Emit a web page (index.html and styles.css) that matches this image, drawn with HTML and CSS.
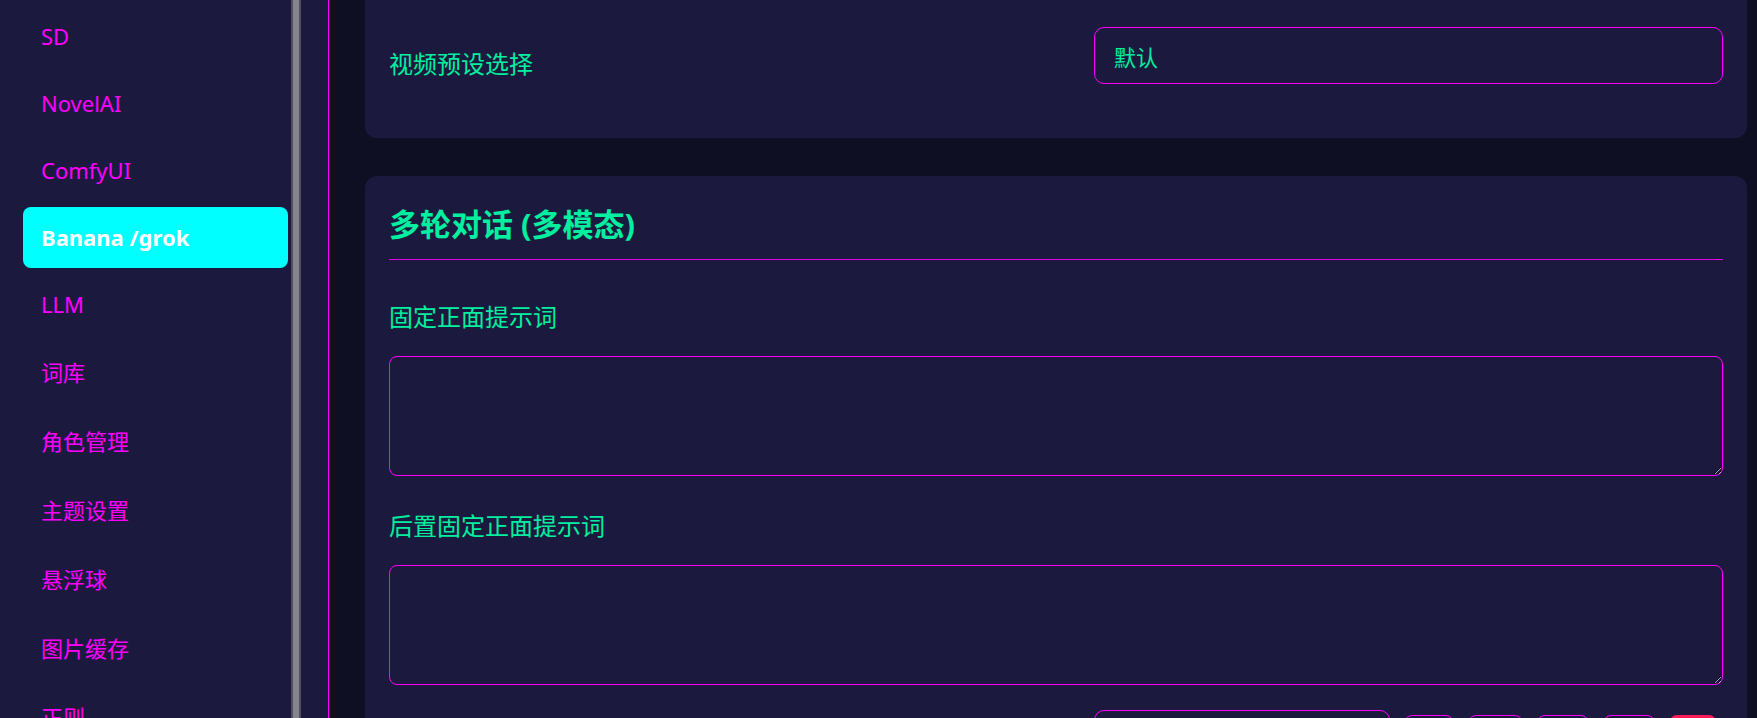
FILE: index.html
```html
<!DOCTYPE html>
<html lang="zh-CN">
<head>
<meta charset="utf-8">
<title>设置</title>
<link rel="stylesheet" href="styles.css">
</head>
<body>
<div class="app">
  <aside class="sidebar">
    <nav class="nav">
      <div class="nav-item">SD</div>
      <div class="nav-item">NovelAI</div>
      <div class="nav-item">ComfyUI</div>
      <div class="nav-item active">Banana /grok</div>
      <div class="nav-item">LLM</div>
      <div class="nav-item tall">词库</div>
      <div class="nav-item tall">角色管理</div>
      <div class="nav-item tall">主题设置</div>
      <div class="nav-item tall">悬浮球</div>
      <div class="nav-item tall">图片缓存</div>
      <div class="nav-item tall">正则</div>
    </nav>
    <div class="scrollbar"></div>
  </aside>
  <main class="main">
    <section class="card card-scrolled">
      <div class="row">
        <label class="row-label">视频预设选择</label>
        <div class="select">默认</div>
      </div>
    </section>
    <section class="card">
      <h2 class="card-title">多轮对话 (多模态)</h2>
      <div class="field">
        <label class="field-label">固定正面提示词</label>
        <textarea class="textarea"></textarea>
      </div>
      <div class="field last">
        <label class="field-label">后置固定正面提示词</label>
        <textarea class="textarea"></textarea>
      </div>
      <div class="row row-center">
        <div class="row-spacer"></div>
        <div class="controls">
          <input class="input" type="text">
          <button class="btn w1"></button>
          <button class="btn w2"></button>
          <button class="btn w3"></button>
          <button class="btn w4"></button>
          <button class="btn danger w5"></button>
        </div>
      </div>
    </section>
  </main>
</div>
</body>
</html>
```

FILE: styles.css
```css
* { box-sizing: border-box; }
html, body {
  margin: 0;
  height: 100%;
  overflow: hidden;
  background: #0f0f23;
  font-family: "Noto Sans", "Noto Sans CJK SC", sans-serif;
}
.app {
  display: flex;
  height: 718px;
}
.sidebar {
  width: 329px;
  flex: none;
  display: flex;
  background: #1b1a3e;
  border-right: 1px solid #ff00ff;
}
.nav {
  width: 291px;
  padding: 6px 3px 0 23px;
  display: flex;
  flex-direction: column;
  gap: 6px;
}
.nav-item {
  padding: 16px 18px;
  line-height: 29px;
  font-size: 22px;
  color: #ff00ff;
  border-radius: 8px;
  white-space: nowrap;
}
.nav-item.tall { line-height: 31px; }
.nav-item.active {
  background: #00ffff;
  color: #ffffff;
  font-weight: 700;
}
.scrollbar {
  width: 10px;
  flex: none;
  background: #85858f;
  border-left: 2px solid #50505e;
  border-right: 2px solid #50505e;
}
.main {
  flex: 1;
  padding: 0 10px 0 36px;
  overflow: hidden;
}
.card {
  background: #1b1a3e;
  border-radius: 12px;
  padding: 24px;
  margin-bottom: 38px;
}
.card-scrolled {
  margin-top: -40px;
  padding-top: 67px;
}
.row {
  display: flex;
  align-items: flex-start;
  margin-bottom: 30px;
}
.row-label {
  flex: 1;
  font-size: 24px;
  line-height: 36px;
  margin-top: 19px;
  color: #00f0a0;
}
.row-spacer { flex: 1; }
.select {
  width: 629px;
  height: 57px;
  border: 1px solid #ff00ff;
  border-radius: 10px;
  padding-left: 19px;
  display: flex;
  align-items: center;
  font-size: 22px;
  color: #00f0a0;
}
.card-title {
  margin: 0 0 39px;
  padding: 4px 0 15px;
  font-size: 31px;
  line-height: 40px;
  font-weight: 700;
  color: #00f0a0;
  border-bottom: 1px solid #e000e0;
}
.field { margin-bottom: 32px; }
.field.last { margin-bottom: 25px; }
.field-label {
  display: block;
  font-size: 24px;
  line-height: 36px;
  margin-bottom: 21px;
  color: #00f0a0;
}
.textarea {
  display: block;
  width: 100%;
  height: 120px;
  background: transparent;
  border: 1px solid #ff00ff;
  border-radius: 8px;
  color: #00f0a0;
  font: inherit;
  outline: none;
}
.row-center { align-items: center; }
.controls {
  width: 629px;
  display: flex;
  align-items: center;
  gap: 14px;
}
.input {
  width: 296px;
  height: 50px;
  background: transparent;
  border: 1px solid #ff00ff;
  border-radius: 10px;
  outline: none;
}
.btn {
  height: 40px;
  background: transparent;
  border: 1px solid #ff00ff;
  border-radius: 8px;
  padding: 0;
}
.w1 { width: 50px; }
.w2 { width: 55px; }
.w3 { width: 52px; }
.w4 { width: 52px; }
.w5 { width: 48px; }
.btn.danger {
  background: #ff1a5a;
  border-color: #ff1a5a;
}
```
